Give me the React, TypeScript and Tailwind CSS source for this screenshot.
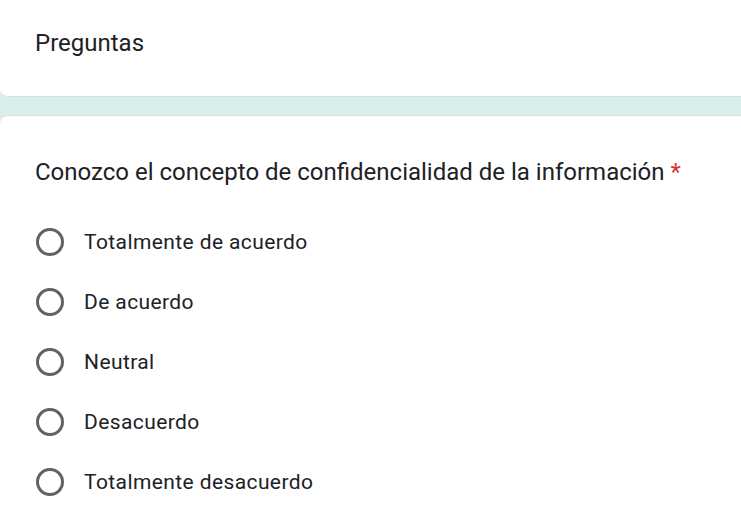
import React from "react";

const options = [
  "Totalmente de acuerdo",
  "De acuerdo",
  "Neutral",
  "Desacuerdo",
  "Totalmente desacuerdo",
];

export default function App() {
  return (
    <div
      className="w-[741px] h-[512px] overflow-hidden bg-[#d9efed] text-[#202124]"
      style={{ fontFamily: "Roboto, 'Liberation Sans', sans-serif" }}
    >
      <div className="h-[97px] bg-white border-b border-[#dadce0] rounded-bl-[8px] pl-[35px] pt-[28px] mr-[-20px]">
        <div className="text-[24px] leading-[30px]">Preguntas</div>
      </div>
      <div className="mt-[18px] h-[500px] bg-white border-t border-[#dadce0] rounded-tl-[8px] mr-[-20px] pl-[35px] pt-[40px]">
        <div className="text-[24px] leading-[32px]">
          Conozco el concepto de confidencialidad de la información{" "}
          <span className="text-[#d93025]">*</span>
        </div>
        <div className="mt-[40px] flex flex-col gap-[32px]">
          {options.map((o) => (
            <div key={o} className="flex items-center h-[28px]">
              <div className="w-[28px] h-[28px] rounded-full border-[3px] border-[#5f6368] ml-[1px]" />
              <span className="ml-[20px] text-[21px] tracking-[0.4px] leading-[28px]">{o}</span>
            </div>
          ))}
        </div>
      </div>
    </div>
  );
}
